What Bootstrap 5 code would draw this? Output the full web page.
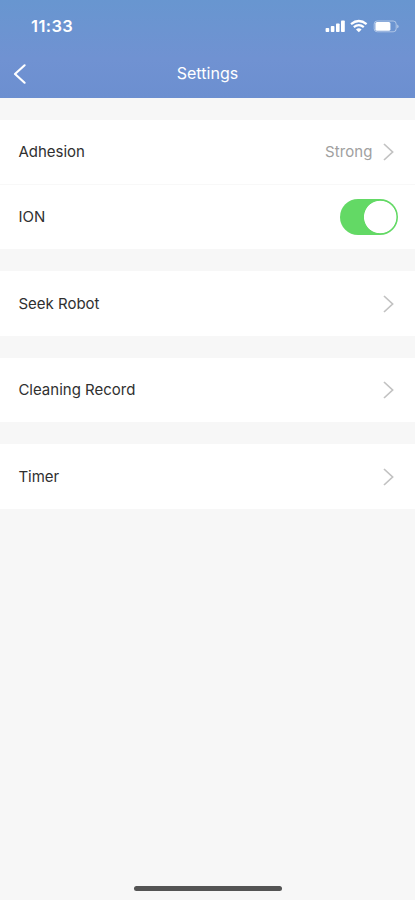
<!DOCTYPE html>
<html lang="en">
<head>
<meta charset="utf-8">
<meta name="viewport" content="width=device-width, initial-scale=1">
<title>Settings</title>
<link href="https://cdn.jsdelivr.net/npm/bootstrap@5.3.0/dist/css/bootstrap.min.css" rel="stylesheet">
<style>
  body { font-family: Inter, "Liberation Sans", sans-serif; background: #f7f7f7; font-size: 15px; line-height: 20px; color: #303030; }
  .screen { height: 900px; }
  .app-header { height: 98px; background: linear-gradient(#6896d0, #7092d2 60%, #6c8fd0); margin-bottom: 22px; }
  .status-bar { height: 51px; padding: 1px 16px 0 31px; }
  .clock { font-size: 16.5px; font-weight: 600; letter-spacing: .4px; }
  .title-bar { height: 45px; padding: 0 12px; }
  .title-bar h1 { font-size: 16px; font-weight: 400; line-height: 20px; padding-bottom: 1px; letter-spacing: .05px; }
  .side { width: 16px; }
  .settings-group { margin-bottom: 22px; }
  .settings-group .list-group-item { height: 64.5px; padding: 1px 21px 0 18.4px; border-color: #f8f8f8; color: inherit; background: #fff; }
  .settings-group .list-group-item.switch-row { padding: 0 17px 0 18.4px; }
  .setting-value { color: #a0a0a0; margin-right: 10.5px; letter-spacing: .1px; }
  .chevron { stroke: #c2c2c2; }
  .form-check-input.ion-switch { width: 58px; height: 36px; margin: 0; border: 0; }
  .form-check-input.ion-switch:checked { background-color: #63d965; background-position: 0 0; background-size: 100% 100%;
    background-image: radial-gradient(circle at 40.2px 18px, #fff 15.8px, transparent 16.6px); }
  .home-bar { width: 148px; height: 5px; background: #545454; margin-bottom: 9px; }
</style>
<script src="https://cdn.jsdelivr.net/npm/bootstrap@5.3.0/dist/js/bootstrap.bundle.min.js"></script>
</head>
<body>
<div class="screen d-flex flex-column overflow-hidden">
  <header class="app-header text-white flex-shrink-0">
    <div class="status-bar d-flex align-items-center justify-content-between">
      <span class="clock">11:33</span>
      <svg width="74" height="14" viewBox="0 0 74 14" fill="#fff" aria-hidden="true">
        <rect x=".6" y="9" width="3.6" height="4" rx=".8"/><rect x="5.8" y="7" width="3.6" height="6" rx=".8"/><rect x="11" y="4.5" width="3.6" height="8.5" rx=".8"/><rect x="16" y="1.5" width="3.8" height="11.5" rx=".8"/>
        <g fill="none" stroke="#fff" stroke-width="2.2"><path d="M26 5.2Q33.8-1.2 41.6 5.2M28.8 8.2Q33.8 4 38.8 8.2"/></g>
        <path d="M31 10.4Q33.8 8.2 36.6 10.4L33.8 13.2z"/>
        <rect x="49.2" y="2" width="22" height="10.8" rx="3" fill="none" stroke="#fff" stroke-opacity=".45"/>
        <rect x="50.4" y="3" width="15" height="8.8" rx="1.6"/>
        <path d="M72.2 5.5q1.4.5 1.4 1.9t-1.4 1.9z" fill-opacity=".5"/>
      </svg>
    </div>
    <div class="title-bar d-flex align-items-center justify-content-between">
      <svg class="side" height="22" viewBox="0 0 16 22" fill="none" stroke="#fff" stroke-width="2.2" stroke-linecap="round" stroke-linejoin="round" aria-label="Back"><path d="M12.6 2.3 3 11l9.6 8.7"/></svg>
      <h1 class="m-0">Settings</h1>
      <span class="side"></span>
    </div>
  </header>
  <main class="flex-grow-1">
    <div class="list-group list-group-flush settings-group">
      <div class="list-group-item d-flex align-items-center"><span class="me-auto">Adhesion</span><span class="setting-value">Strong</span><svg class="chevron" width="11" height="18" viewBox="0 0 11 18" fill="none" stroke-width="1.7"><path d="M1 1l8.6 8L1 17"/></svg></div>
      <div class="list-group-item switch-row d-flex align-items-center"><label class="me-auto" for="ion">ION</label><div class="form-switch p-0 m-0 d-flex"><input class="form-check-input ion-switch" type="checkbox" role="switch" id="ion" checked></div></div>
    </div>
    <div class="list-group list-group-flush settings-group">
      <div class="list-group-item d-flex align-items-center"><span class="me-auto">Seek Robot</span><svg class="chevron" width="11" height="18" viewBox="0 0 11 18" fill="none" stroke-width="1.7"><path d="M1 1l8.6 8L1 17"/></svg></div>
    </div>
    <div class="list-group list-group-flush settings-group">
      <div class="list-group-item d-flex align-items-center"><span class="me-auto">Cleaning Record</span><svg class="chevron" width="11" height="18" viewBox="0 0 11 18" fill="none" stroke-width="1.7"><path d="M1 1l8.6 8L1 17"/></svg></div>
    </div>
    <div class="list-group list-group-flush settings-group">
      <div class="list-group-item d-flex align-items-center"><span class="me-auto">Timer</span><svg class="chevron" width="11" height="18" viewBox="0 0 11 18" fill="none" stroke-width="1.7"><path d="M1 1l8.6 8L1 17"/></svg></div>
    </div>
  </main>
  <div class="home-bar rounded-pill mx-auto flex-shrink-0"></div>
</div>
</body>
</html>
